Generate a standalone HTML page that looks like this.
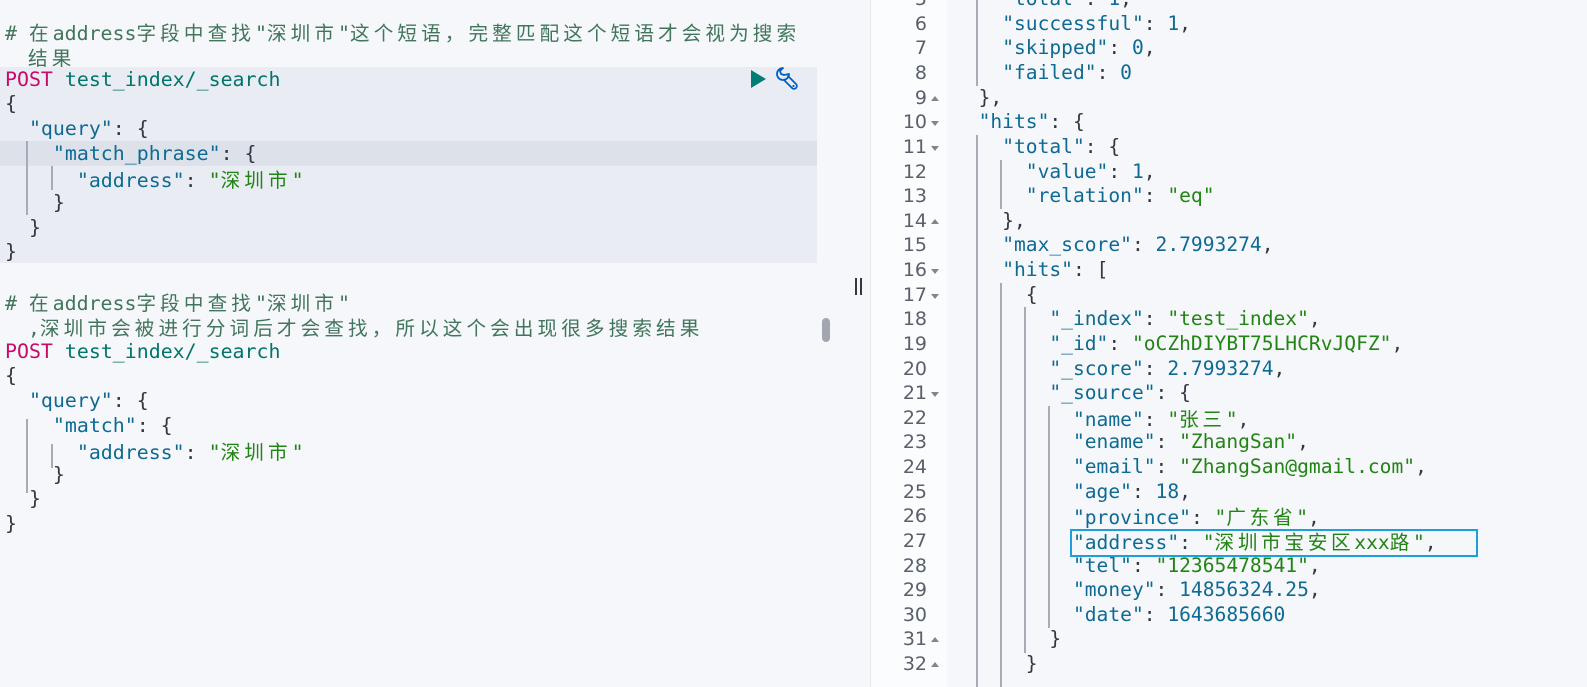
<!DOCTYPE html>
<html><head><meta charset="utf-8">
<style>
html,body{margin:0;padding:0;width:1587px;height:687px;overflow:hidden;background:#f5f7fa;position:relative;font-family:"DejaVu Sans Mono","Liberation Mono","Noto Sans CJK SC",monospace;font-size:19.6px;}
.l{position:absolute;white-space:pre;height:24.6px;line-height:24.6px;color:#343741;}
.L{font-size:19.9px}
.c{letter-spacing:3.7px;font-family:"Noto Sans CJK SC","WenQuanYi Zen Hei",sans-serif;font-size:19.6px;}
.L .c{letter-spacing:4.1px}
.k{color:#0f6a93}.s{color:#228414}.n{color:#0f6a93}.cm{color:#41755c}.p{color:#c80a68}.u{color:#00756b}.b{color:#343741}
.g{position:absolute;width:2px;background:#a6abb6}
.ln{position:absolute;left:870px;width:57px;text-align:right;color:#5a606b;font-family:"DejaVu Sans",sans-serif;font-size:19px;height:24.6px;line-height:24.6px}
.ar{position:absolute;left:931px;width:0;height:0;border-left:4px solid transparent;border-right:4px solid transparent}
.dn{border-top:5px solid #808590}.up{border-bottom:5px solid #808590}
#R{position:absolute;left:0;top:2px;width:1587px;height:687px}
</style></head><body>
<div style="position:absolute;left:0;top:0;width:838px;height:687px;background:#f5f7fa"></div>
<div style="position:absolute;left:0;top:67px;width:817px;height:196px;background:#e9ecf3"></div>
<div style="position:absolute;left:0;top:141px;width:817px;height:25px;background:#dde2ea"></div>
<div style="position:absolute;left:822px;top:318px;width:8px;height:24px;border-radius:4px;background:#a2a6ae"></div>

<div class="l L cm" style="left:5px;top:20px"># <span class="c">在</span>address<span class="c">字段中查找</span>"<span class="c">深圳市</span>"<span class="c">这个短语，完整匹配这个短语才会视为搜索</span></div>
<div class="l L cm" style="left:28px;top:45px"><span class="c">结果</span></div>
<div class="l L" style="left:5px;top:68px"><span class="p">POST</span> <span class="u">test_index/_search</span></div>
<div class="l L" style="left:5px;top:92px">{</div>
<div class="l L" style="left:5px;top:117px">  <span class="k">"query"</span>: {</div>
<div class="l L" style="left:5px;top:142px">    <span class="k">"match_phrase"</span>: {</div>
<div class="l L" style="left:5px;top:167px">      <span class="k">"address"</span>: <span class="s">"<span class="c">深圳市</span>"</span></div>
<div class="l L" style="left:5px;top:191px">    }</div>
<div class="l L" style="left:5px;top:216px">  }</div>
<div class="l L" style="left:5px;top:240px">}</div>
<div class="g" style="left:26px;top:141px;height:74px"></div>
<div class="g" style="left:51px;top:166px;height:24px"></div>

<div class="l L cm" style="left:5px;top:290px"># <span class="c">在</span>address<span class="c">字段中查找</span>"<span class="c">深圳市</span>"</div>
<div class="l L cm" style="left:28px;top:315px">,<span class="c">深圳市会被进行分词后才会查找，所以这个会出现很多搜索结果</span></div>
<div class="l L" style="left:5px;top:340px"><span class="p">POST</span> <span class="u">test_index/_search</span></div>
<div class="l L" style="left:5px;top:364px">{</div>
<div class="l L" style="left:5px;top:389px">  <span class="k">"query"</span>: {</div>
<div class="l L" style="left:5px;top:414px">    <span class="k">"match"</span>: {</div>
<div class="l L" style="left:5px;top:439px">      <span class="k">"address"</span>: <span class="s">"<span class="c">深圳市</span>"</span></div>
<div class="l L" style="left:5px;top:463px">    }</div>
<div class="l L" style="left:5px;top:487px">  }</div>
<div class="l L" style="left:5px;top:512px">}</div>
<div class="g" style="left:26px;top:419px;height:74px"></div>
<div class="g" style="left:51px;top:444px;height:24px"></div>

<svg style="position:absolute;left:748px;top:64px" width="58" height="32" viewBox="0 0 58 32">
<path d="M3 6 L18 15 L3 24 Z" fill="#017d73"/>
<path d="M41 10 a6 6 0 1 1 -6 -6 l-3 3 l1 3 l3 1 z M39.5 11.5 l8.5 8.5 a2.6 2.6 0 0 1 -4 4 l-8.5 -8.5" fill="none" stroke="#0061c2" stroke-width="1.8" stroke-linejoin="round"/>
<circle cx="45.5" cy="22" r="1.1" fill="#0061c2"/>
</svg>

<div style="position:absolute;left:838px;top:0;width:32px;height:687px;background:#f5f7fa"></div>
<div style="position:absolute;left:855px;top:278px;width:2px;height:17px;background:#343741"></div>
<div style="position:absolute;left:860px;top:278px;width:2px;height:17px;background:#343741"></div>

<div style="position:absolute;left:870px;top:0;width:1px;height:687px;background:#e3e6eb"></div>
<div style="position:absolute;left:871px;top:0;width:76px;height:687px;background:#fbfcfd"></div>

<div id="R">
<div class="ln" style="top:-15px">5</div><div class="ln" style="top:10px">6</div><div class="ln" style="top:34px">7</div><div class="ln" style="top:59px">8</div><div class="ln" style="top:84px">9</div><div class="ln" style="top:108px">10</div><div class="ln" style="top:133px">11</div><div class="ln" style="top:158px">12</div><div class="ln" style="top:182px">13</div><div class="ln" style="top:207px">14</div><div class="ln" style="top:231px">15</div><div class="ln" style="top:256px">16</div><div class="ln" style="top:281px">17</div><div class="ln" style="top:305px">18</div><div class="ln" style="top:330px">19</div><div class="ln" style="top:355px">20</div><div class="ln" style="top:379px">21</div><div class="ln" style="top:404px">22</div><div class="ln" style="top:428px">23</div><div class="ln" style="top:453px">24</div><div class="ln" style="top:478px">25</div><div class="ln" style="top:502px">26</div><div class="ln" style="top:527px">27</div><div class="ln" style="top:552px">28</div><div class="ln" style="top:576px">29</div><div class="ln" style="top:601px">30</div><div class="ln" style="top:625px">31</div><div class="ln" style="top:650px">32</div>

<div class="ar up" style="top:94px"></div>
<div class="ar dn" style="top:119px"></div>
<div class="ar dn" style="top:144px"></div>
<div class="ar up" style="top:217px"></div>
<div class="ar dn" style="top:267px"></div>
<div class="ar dn" style="top:292px"></div>
<div class="ar dn" style="top:390px"></div>
<div class="ar up" style="top:635px"></div>
<div class="ar up" style="top:660px"></div>

<div class="g" style="left:976px;top:-2px;height:86px"></div>
<div class="g" style="left:976px;top:133px;height:554px"></div>
<div class="g" style="left:1000px;top:158px;height:49px"></div>
<div class="g" style="left:1000px;top:281px;height:406px"></div>
<div class="g" style="left:1024px;top:305px;height:346px"></div>
<div class="g" style="left:1048px;top:404px;height:222px"></div>

<div class="l" style="left:955px;top:-15px">    <span class="k">"total"</span>: <span class="n">1</span>,</div>
<div class="l" style="left:955px;top:10px">    <span class="k">"successful"</span>: <span class="n">1</span>,</div>
<div class="l" style="left:955px;top:34px">    <span class="k">"skipped"</span>: <span class="n">0</span>,</div>
<div class="l" style="left:955px;top:59px">    <span class="k">"failed"</span>: <span class="n">0</span></div>
<div class="l" style="left:955px;top:84px">  },</div>
<div class="l" style="left:955px;top:108px">  <span class="k">"hits"</span>: {</div>
<div class="l" style="left:955px;top:133px">    <span class="k">"total"</span>: {</div>
<div class="l" style="left:955px;top:158px">      <span class="k">"value"</span>: <span class="n">1</span>,</div>
<div class="l" style="left:955px;top:182px">      <span class="k">"relation"</span>: <span class="s">"eq"</span></div>
<div class="l" style="left:955px;top:207px">    },</div>
<div class="l" style="left:955px;top:231px">    <span class="k">"max_score"</span>: <span class="n">2.7993274</span>,</div>
<div class="l" style="left:955px;top:256px">    <span class="k">"hits"</span>: [</div>
<div class="l" style="left:955px;top:281px">      {</div>
<div class="l" style="left:955px;top:305px">        <span class="k">"_index"</span>: <span class="s">"test_index"</span>,</div>
<div class="l" style="left:955px;top:330px">        <span class="k">"_id"</span>: <span class="s">"oCZhDIYBT75LHCRvJQFZ"</span>,</div>
<div class="l" style="left:955px;top:355px">        <span class="k">"_score"</span>: <span class="n">2.7993274</span>,</div>
<div class="l" style="left:955px;top:379px">        <span class="k">"_source"</span>: {</div>
<div class="l" style="left:955px;top:404px">          <span class="k">"name"</span>: <span class="s">"<span class="c">张三</span>"</span>,</div>
<div class="l" style="left:955px;top:428px">          <span class="k">"ename"</span>: <span class="s">"ZhangSan"</span>,</div>
<div class="l" style="left:955px;top:453px">          <span class="k">"email"</span>: <span class="s">"ZhangSan@gmail.com"</span>,</div>
<div class="l" style="left:955px;top:478px">          <span class="k">"age"</span>: <span class="n">18</span>,</div>
<div class="l" style="left:955px;top:502px">          <span class="k">"province"</span>: <span class="s">"<span class="c">广东省</span>"</span>,</div>
<div class="l" style="left:955px;top:527px">          <span class="k">"address"</span>: <span class="s">"<span class="c">深圳市宝安区</span>xxx<span class="c">路</span>"</span>,</div>
<div class="l" style="left:955px;top:552px">          <span class="k">"tel"</span>: <span class="s">"12365478541"</span>,</div>
<div class="l" style="left:955px;top:576px">          <span class="k">"money"</span>: <span class="n">14856324.25</span>,</div>
<div class="l" style="left:955px;top:601px">          <span class="k">"date"</span>: <span class="n">1643685660</span></div>
<div class="l" style="left:955px;top:625px">        }</div>
<div class="l" style="left:955px;top:650px">      }</div>

<div style="position:absolute;left:1070px;top:527px;width:404px;height:24px;border:2px solid #1ba0dc"></div>
</div>
</body></html>
